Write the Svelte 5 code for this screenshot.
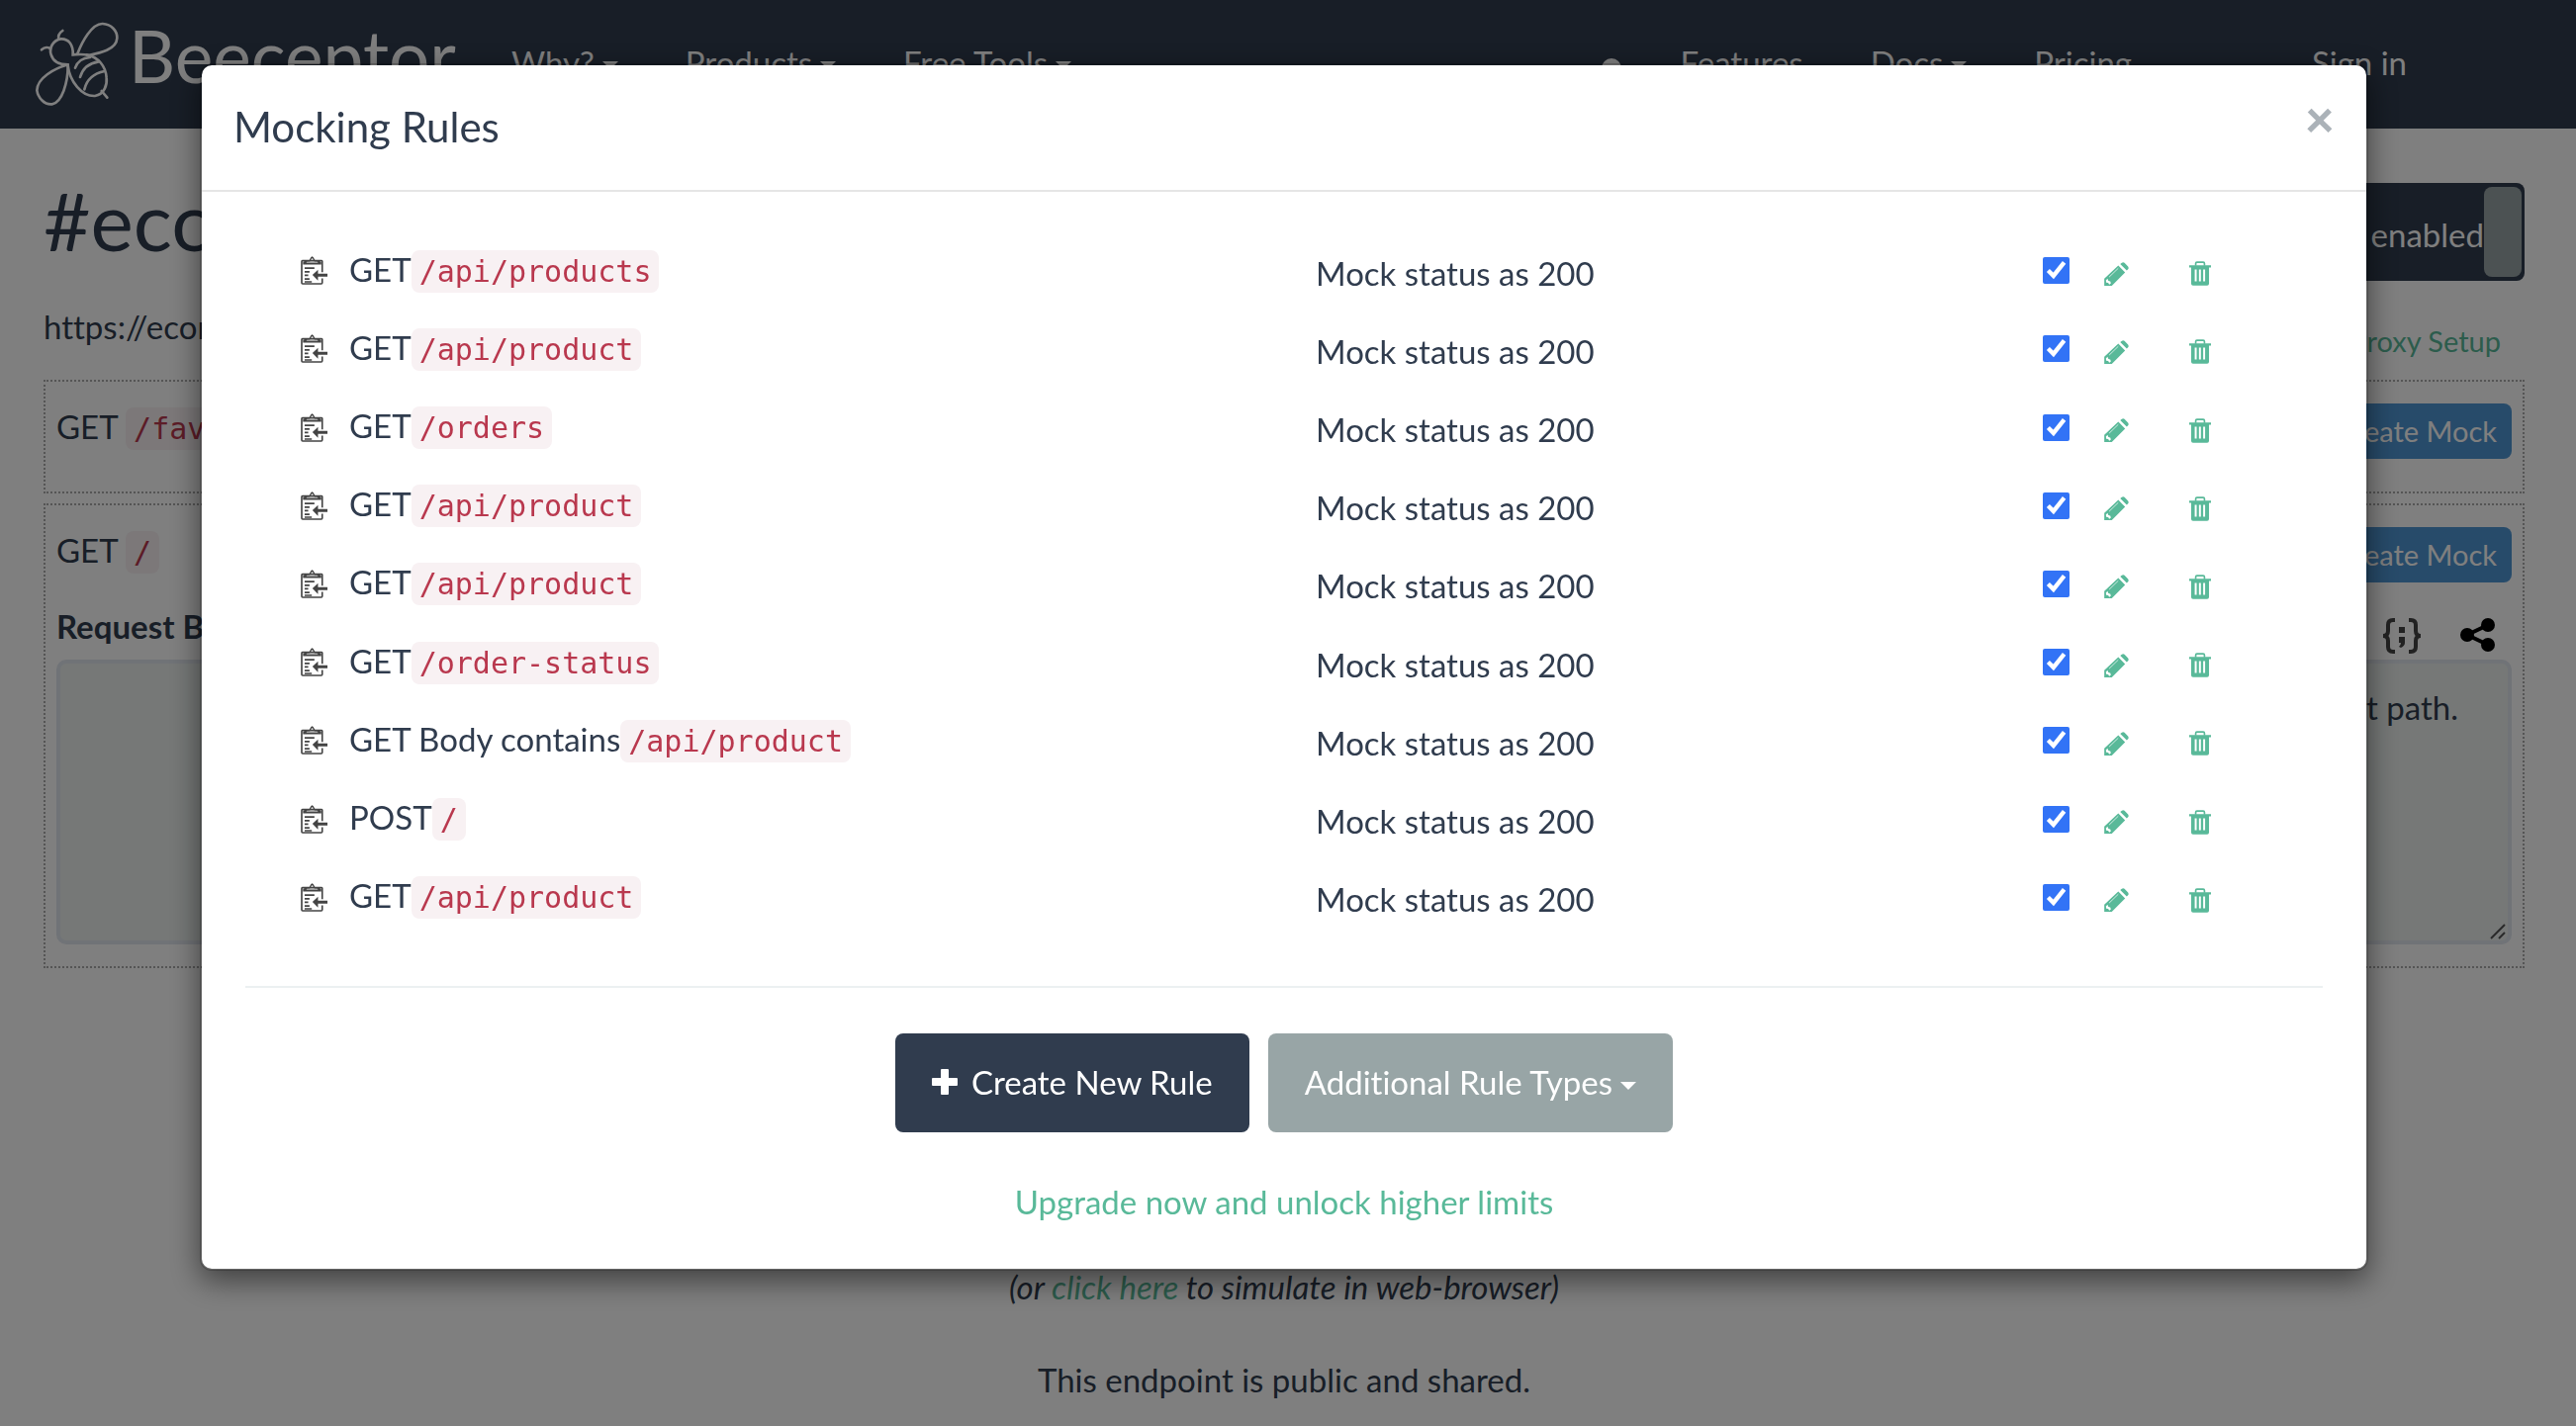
<script>
  let rules = $state([
    { method: 'GET', path: '/api/products', enabled: true },
    { method: 'GET', path: '/api/product', enabled: true },
    { method: 'GET', path: '/orders', enabled: true },
    { method: 'GET', path: '/api/product', enabled: true },
    { method: 'GET', path: '/api/product', enabled: true },
    { method: 'GET', path: '/order-status', enabled: true },
    { method: 'GET Body contains', path: '/api/product', enabled: true },
    { method: 'POST', path: '/', enabled: true },
    { method: 'GET', path: '/api/product', enabled: true },
  ]);

  const products = [
    { label: 'Why?', menu: true },
    { label: 'Products', menu: true },
    { label: 'Free Tools', menu: true },
  ];
  const info = [
    { label: 'Features' },
    { label: 'Docs', menu: true },
    { label: 'Pricing' },
  ];

  let open = $state(true);

  function remove(index) {
    rules.splice(index, 1);
  }
</script>

<div class="page">
  <nav class="navbar">
    <a class="brand" href="#home">
      <svg class="bee" viewBox="45 35 252 255" aria-hidden="true">
        <path d="M172 132C185 98 215 40 248 41C275 43 293 62 292 85C290 120 240 130 205 137" />
        <path d="M205 137C190 132 176 134 158 135C160 105 145 86 122 87C98 90 85 115 92 135C98 155 115 165 143 165" />
        <path d="M115 88C112 75 118 68 127 62M90 118C85 110 72 112 63 120" />
        <path d="M143 165C100 178 50 205 49 243C52 265 72 288 95 285C125 280 143 220 143 168" />
        <path d="M143 168C148 215 185 262 225 260C255 255 262 225 260 205C258 170 235 142 200 135" />
        <path d="M165 175C172 155 185 145 210 143M180 203C188 175 210 160 236 156M193 240C200 210 220 192 254 185M245 245L262 265" />
      </svg>
      <span class="wordmark">Beeceptor</span>
    </a>
    <div class="links">
      {#each products as item}
        <a href="#nav">{item.label}{#if item.menu}<i class="caret"></i>{/if}</a>
      {/each}
    </div>
    <div class="links end">
      <span class="dot"></span>
      {#each info as item}
        <a href="#nav">{item.label}{#if item.menu}<i class="caret"></i>{/if}</a>
      {/each}
      <a class="signin" href="#signin">Sign in</a>
    </div>
  </nav>

  <main>
    <div class="heading">
      <h1>#econ</h1>
      <button class="toggle" type="button"><span>Mocking enabled</span><i class="knob"></i></button>
    </div>
    <div class="endpoint">
      <span>https://econ</span>
      <a href="#proxy">Proxy Setup</a>
    </div>

    <section class="request">
      <div class="line">
        <span>GET <code>/favicon.ico</code></span>
        <button class="mock" type="button">Create Mock</button>
      </div>
    </section>

    <section class="request">
      <div class="line">
        <span>GET <code>/</code></span>
        <button class="mock" type="button">Create Mock</button>
      </div>
      <div class="bodies">
        <div class="pane">
          <label for="req">Request Body</label>
          <textarea id="req"></textarea>
        </div>
        <div class="pane">
          <div class="tools">
            <svg width="40" height="36" viewBox="0 0 40 36" aria-hidden="true">
              <path d="M13 2H11Q6 2 6 7V13Q6 18 1 18Q6 18 6 23V29Q6 34 11 34H13M27 2H29Q34 2 34 7V13Q34 18 39 18Q34 18 34 23V29Q34 34 29 34H27" fill="none" stroke="#444" stroke-width="4" />
              <path d="M17 9h6v6h-6zM17 19h6v6q0 3-4 5l-2-1q2-2 2-4h-2z" fill="#444" />
            </svg>
            <svg width="35" height="34" viewBox="0 0 35 34" aria-hidden="true">
              <path d="M28 7L7 17L28 27" fill="none" stroke="#000" stroke-width="4" />
              <circle cx="28" cy="7" r="7" /><circle cx="7" cy="17" r="7" /><circle cx="28" cy="27" r="7" />
            </svg>
          </div>
          <textarea id="res" class="response" aria-label="Response">nothing is configured for this request path.</textarea>
          <svg class="grip" width="16" height="16" viewBox="0 0 16 16" aria-hidden="true">
            <path d="M1 15L15 1M9 15L15 9" fill="none" stroke="#555" stroke-width="2" />
          </svg>
        </div>
      </div>
    </section>

    <div class="hints">
      <p><em>(or <a href="#simulate">click here</a> to simulate in web-browser)</em></p>
      <p>This endpoint is public and shared.</p>
    </div>
  </main>
</div>

{#if open}
  <div class="backdrop">
    <div class="modal" role="dialog" aria-labelledby="modal-title">
      <header>
        <h4 id="modal-title">Mocking Rules</h4>
        <button class="close" type="button" aria-label="Close" onclick={() => (open = false)}>×</button>
      </header>
      <div class="content">
        <table>
          <tbody>
            {#each rules as rule, i}
              <tr>
                <td class="copy">
                  <svg width="27" height="29" viewBox="0 0 82 88" aria-hidden="true">
                    <path d="M66 49V16Q66 14 63 14H5Q3 14 3 17V82Q3 85 6 85H63Q66 85 66 82V68" fill="none" stroke="#444" stroke-width="5" />
                    <path d="M7 26V19L14 14H22Q27 14 28 9Q35 -7 42 9Q43 14 48 14H56L63 19V26ZM17 20H53L50 17H43Q38 16 38 10Q35 4 32 10Q32 16 27 17H20Z" fill="#444" fill-rule="evenodd" />
                    <path d="M12 37H42M12 48H27M12 59H23M12 70H27M12 79H34" fill="none" stroke="#444" stroke-width="5" />
                    <path d="M36 58L53 42V54H82V63H53V75Z" fill="#444" />
                  </svg>
                </td>
                <td class="match">{rule.method}<code>{rule.path}</code></td>
                <td class="status">Mock status as 200</td>
                <td class="check">
                  <input type="checkbox" aria-label="Enable rule" bind:checked={rule.enabled} />
                </td>
                <td class="edit">
                  <button class="icon" type="button" aria-label="Edit rule">
                    <svg width="25" height="24" viewBox="0 0 75 73">
                      <path d="M49 6L54 2Q58 -1 62 2L73 14Q76 18 73 22L69 26ZM43 11L64 32L23 73H0V51Z" fill="#59b999" />
                      <path d="M15 46L43 19" stroke="#fff" stroke-width="3" opacity=".7" />
                      <path d="M5 56L10 51L12 57L19 60L20 66L15 69L12 64L6 63Z" fill="#fff" />
                    </svg>
                  </button>
                </td>
                <td class="delete">
                  <button class="icon" type="button" aria-label="Delete rule" onclick={() => remove(i)}>
                    <svg width="22" height="25" viewBox="0 0 67 75">
                      <path d="M20 14V7Q20 3 24 3H43Q47 3 47 7V14" fill="none" stroke="#59b999" stroke-width="5" />
                      <path d="M0 12H67V19H61V69Q61 75 55 75H12Q6 75 6 69V19H0ZM17 25V62H23V25ZM30 25V62H36V25ZM43 25V62H49V25Z" fill="#59b999" fill-rule="evenodd" />
                    </svg>
                  </button>
                </td>
              </tr>
            {/each}
          </tbody>
        </table>
        <hr />
        <div class="actions">
          <button class="btn primary" type="button">
            <svg width="26" height="26" viewBox="0 0 26 26" aria-hidden="true">
              <path d="M9 1Q9 0 10 0H16Q17 0 17 1V9H25Q26 9 26 10V16Q26 17 25 17H17V25Q17 26 16 26H10Q9 26 9 25V17H1Q0 17 0 16V10Q0 9 1 9H9Z" fill="#fff" />
            </svg>
            Create New Rule
          </button>
          <button class="btn" type="button">Additional Rule Types<i class="caret"></i></button>
        </div>
        <a class="upgrade" href="#upgrade">Upgrade now and unlock higher limits</a>
      </div>
    </div>
  </div>
{/if}

<style>
  :global(body) {
    margin: 0;
    background: #fff;
    color: #303c4e;
    font: 33px/48px Lato, sans-serif;
    font-variant-ligatures: none;
  }
  a {
    color: #59b999;
    text-decoration: none;
  }
  button {
    border: 0;
    padding: 0;
    background: none;
    color: inherit;
    font: inherit;
    font-variant-ligatures: none;
    cursor: pointer;
  }
  code {
    padding: 4px 8px;
    border-radius: 8px;
    background: #f8f1f3;
    color: #b9384e;
    font: 30px "DejaVu Sans Mono", monospace;
  }
  .caret {
    display: inline-block;
    margin-left: 8px;
    vertical-align: middle;
    border: 8px solid transparent;
    border-top-color: currentColor;
    border-bottom: 0;
  }

  .navbar {
    display: flex;
    align-items: center;
    height: 130px;
    padding: 0 171px 0 36px;
    background: #303c4e;
  }
  .navbar a {
    color: #fff;
  }
  .brand {
    display: flex;
    align-items: center;
    gap: 10px;
    width: 481px;
  }
  .bee {
    width: 84px;
    height: 85px;
    margin-bottom: 2px;
    fill: none;
    stroke: #fff;
    stroke-width: 8;
    stroke-linecap: round;
  }
  .wordmark {
    font-size: 73px;
    line-height: 112px;
    height: 130px;
  }
  .links {
    display: flex;
    align-items: center;
    gap: 68px;
    padding-bottom: 4px;
  }
  .links .caret {
    margin-bottom: 4px;
  }
  .end {
    margin-left: auto;
  }
  .dot {
    width: 20px;
    height: 20px;
    margin: 12px -8px 0 0;
    border-radius: 10px;
    background: #fff;
  }
  .signin {
    margin-left: 114px;
  }

  main {
    padding: 55px 52px 8px 44px;
  }
  .heading {
    display: flex;
    justify-content: space-between;
    align-items: flex-start;
  }
  h1 {
    margin: 0;
    font-size: 82px;
    line-height: 74px;
    font-weight: 400;
  }
  .toggle {
    display: flex;
    align-items: center;
    height: 99px;
    padding: 0 3px 0 40px;
    border-radius: 8px;
    background: #303c4e;
    color: #fff;
  }
  .toggle span {
    padding-top: 4px;
  }
  .knob {
    width: 38px;
    height: 91px;
    border-radius: 8px;
    background: #98a4a6;
  }
  .endpoint {
    display: flex;
    justify-content: space-between;
    align-items: center;
    height: 72px;
    margin: 10px 0 18px;
  }
  .endpoint a {
    padding: 30px 24px 0 0;
    font-size: 29px;
  }
  .request {
    box-sizing: border-box;
    min-height: 115px;
    margin-bottom: 10px;
    padding: 22px 11px;
    border: 2px dotted #aaa;
  }
  .line {
    display: flex;
    justify-content: space-between;
    align-items: center;
    height: 56px;
  }
  .line span {
    padding-bottom: 10px;
  }
  .mock {
    padding: 0 15px;
    border-radius: 8px;
    background: #4f97d5;
    color: #fff;
    font-size: 29px;
    line-height: 56px;
  }
  .bodies {
    display: grid;
    grid-template-columns: 1fr 1fr;
    gap: 30px;
    margin-top: 22px;
  }
  .pane {
    position: relative;
    display: flex;
    flex-direction: column;
  }
  label {
    height: 56px;
    font-weight: 700;
    line-height: 44px;
  }
  .tools {
    display: flex;
    justify-content: flex-end;
    align-items: flex-start;
    gap: 39px;
    height: 42px;
    padding: 14px 17px 0 0;
  }
  textarea {
    box-sizing: border-box;
    width: 100%;
    height: 288px;
    padding: 20px;
    border: 4px solid #e1e6ee;
    border-radius: 10px;
    background: #ecf1ef;
    color: inherit;
    font: inherit;
    resize: none;
  }
  .response {
    padding-right: 50px;
    text-align: right;
  }
  .grip {
    position: absolute;
    right: 6px;
    bottom: 5px;
  }
  .hints {
    padding-top: 288px;
    text-align: center;
  }
  .hints p {
    margin: 0 0 46px;
  }
  .hints p:last-child {
    margin: 0;
  }

  .backdrop {
    position: fixed;
    inset: 0;
    padding: 64px 210px 0 202px;
    background: rgba(0, 0, 0, 0.5);
  }
  .modal {
    border: 2px solid rgba(0, 0, 0, 0.2);
    border-radius: 12px;
    background: #fff;
    background-clip: padding-box;
    box-shadow: 0 10px 30px rgba(0, 0, 0, 0.5);
  }
  header {
    display: flex;
    justify-content: space-between;
    align-items: center;
    height: 126px;
    padding: 0 32px;
    border-bottom: 2px solid #e5e5e5;
  }
  h4 {
    margin: 0;
    padding-bottom: 2px;
    font-size: 42px;
    font-weight: 400;
  }
  .close {
    padding-bottom: 20px;
    color: #abb2b8;
    font-size: 52px;
    font-weight: 900;
    line-height: 48px;
  }
  .content {
    padding: 40px 44px 42px;
  }
  table {
    width: 100%;
    height: 713px;
    table-layout: fixed;
    border-collapse: collapse;
  }
  td {
    padding: 0;
  }
  td svg {
    display: block;
  }
  .copy {
    width: 49px;
    padding-left: 56px;
  }
  .match {
    padding-bottom: 4px;
  }
  .status {
    width: 35%;
    padding-top: 4px;
  }
  .check {
    width: 62px;
  }
  .check input {
    display: block;
    width: 27px;
    height: 27px;
    margin: 0;
    accent-color: #3273f6;
  }
  .edit {
    width: 86px;
  }
  .delete {
    width: 135px;
  }
  .icon {
    display: block;
    padding-top: 6px;
  }
  hr {
    margin: 50px 0 46px;
    border: 0;
    border-top: 2px solid #ecf0f1;
  }
  .actions {
    display: flex;
    justify-content: center;
    gap: 19px;
  }
  .btn {
    display: flex;
    align-items: center;
    height: 100px;
    padding: 0 37px 2px;
    border-radius: 8px;
    background: #98a5a6;
    color: #fff;
  }
  .btn .caret {
    margin-top: 8px;
  }
  .primary {
    gap: 14px;
    background: #303c4e;
  }
  .upgrade {
    display: block;
    margin-top: 46px;
    padding-bottom: 2px;
    text-align: center;
  }
</style>
